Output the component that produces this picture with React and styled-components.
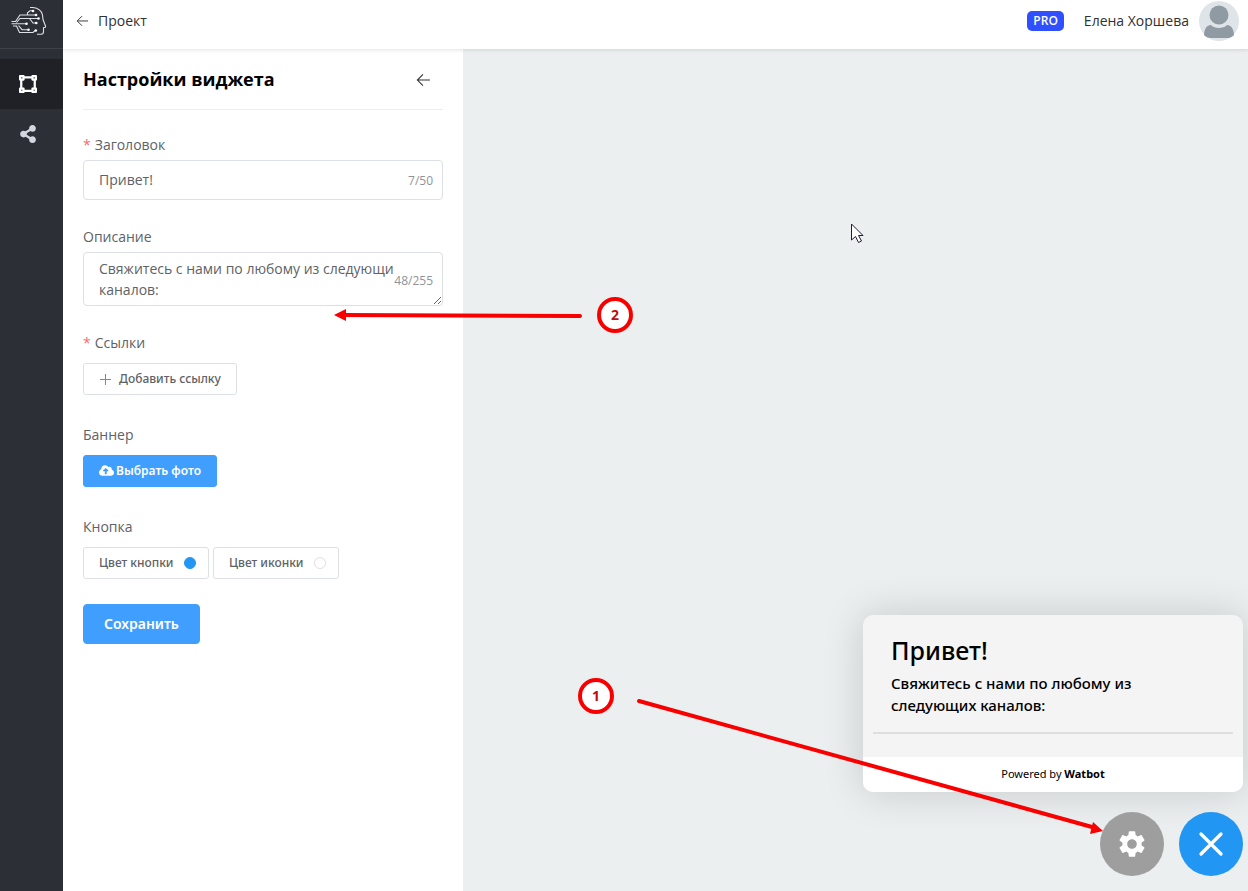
import React, { useState } from "react";
import styled, { createGlobalStyle, css } from "styled-components";
import { FaShareAlt, FaVectorSquare, FaCloudUploadAlt } from "react-icons/fa";
import { MdSettings } from "react-icons/md";

const GlobalStyle = createGlobalStyle`
  *, *::before, *::after { box-sizing: border-box; }
  body {
    margin: 0;
    font-family: "Open Sans", "Noto Sans", sans-serif;
    font-size: 14px;
    color: #606266;
    background: #ebeff0;
  }
  button, input, textarea { font: inherit; color: inherit; }
  button { cursor: pointer; }
`;

const Page = styled.div`
  display: flex;
  min-height: 100vh;
`;

const Sidebar = styled.aside`
  flex: 0 0 63px;
  background: #2d2f37;
`;

const LogoLink = styled.a`
  display: block;
  height: 49px;
  padding: 4px 10px;
  border-bottom: 1px solid #404249;
  svg { display: block; }
`;

const Nav = styled.nav`
  display: flex;
  flex-direction: column;
  padding-top: 10px;
`;

const NavLink = styled.a`
  display: flex;
  align-items: center;
  height: 50px;
  padding-left: 18px;
  color: ${(p) => (p.$active ? "#fff" : "#d3d7e0")};
  background: ${(p) => (p.$active ? "#202126" : "transparent")};
  svg { width: 20px; }
`;

const Body = styled.div`
  flex: 1;
  min-width: 0;
  display: flex;
  flex-direction: column;
`;

const Header = styled.header`
  position: relative;
  z-index: 1;
  display: flex;
  align-items: center;
  justify-content: space-between;
  height: 49px;
  padding: 0 9px 8px 13px;
  color: #303133;
  background: #fff;
  box-shadow: 0 1px 4px rgba(0, 21, 41, 0.12);
`;

const BackLink = styled.a`
  display: flex;
  align-items: center;
  gap: 9px;
  color: inherit;
  text-decoration: none;
`;

const User = styled.div`
  display: flex;
  align-items: center;
`;

const Badge = styled.span`
  margin-right: 20px;
  padding: 0 6px;
  border-radius: 5px;
  font-size: 12px;
  font-weight: 600;
  line-height: 20px;
  color: #fff;
  background: #304ffe;
`;

const Avatar = styled.svg`
  width: 40px;
  height: 40px;
  margin-left: 10px;
`;

const Workspace = styled.div`
  flex: 1;
  display: flex;
`;

const Panel = styled.section`
  flex: 0 0 400px;
  padding: 0 20px;
  background: #fff;
`;

const PanelHead = styled.div`
  display: flex;
  align-items: center;
  justify-content: space-between;
  height: 61px;
  padding-right: 12px;
  border-bottom: 1px solid #ebeef5;
`;

const PanelTitle = styled.h1`
  margin: 0;
  font-size: 18px;
  font-weight: 700;
  color: #000;
`;

const IconButton = styled.button`
  display: flex;
  padding: 0;
  border: 0;
  color: #303133;
  background: none;
`;

const Form = styled.form`
  padding-top: 20px;
`;

const Field = styled.div`
  margin-bottom: 22px;
`;

const labelStyle = css`
  display: block;
  line-height: 30px;
`;

const Label = styled.label`${labelStyle}`;
const GroupLabel = styled.div`${labelStyle}`;

const Required = styled.span`
  margin-right: 4px;
  color: #f56c6c;
`;

const Control = styled.div`
  position: relative;
  display: flex;
`;

const boxStyle = css`
  width: 100%;
  border: 1px solid #dcdfe6;
  border-radius: 4px;
  outline: none;
  background: #fff;
`;

const TextInput = styled.input`
  ${boxStyle}
  height: 40px;
  padding: 0 50px 1px 15px;
`;

const TextArea = styled.textarea`
  ${boxStyle}
  height: 54px;
  padding: 5px 15px;
  line-height: 21px;
  resize: vertical;
  overflow: hidden;
`;

const Counter = styled.span`
  position: absolute;
  right: 10px;
  bottom: 5px;
  font-size: 12px;
  line-height: ${(p) => p.$height}px;
  color: #909399;
  background: #fff;
`;

const Actions = styled.div`
  display: flex;
  gap: 4px;
  padding: 5px 0 3px;
`;

const Button = styled.button`
  display: flex;
  align-items: center;
  gap: ${(p) => p.$gap || 8}px;
  height: 32px;
  padding: 0 15px 1px;
  border: 1px solid ${(p) => (p.$primary ? "#409eff" : "#dcdfe6")};
  border-radius: 3px;
  font-family: "Noto Sans", "Open Sans", sans-serif;
  font-size: 12px;
  font-weight: ${(p) => (p.$primary ? 600 : 500)};
  color: ${(p) => (p.$primary ? "#fff" : "#606266")};
  background: ${(p) => (p.$primary ? "#409eff" : "#fff")};
`;

const ColorButton = styled(Button)`
  justify-content: space-between;
  min-width: 126px;
  padding-right: 12px;
`;

const SaveButton = styled(Button)`
  height: 40px;
  padding: 0 20px 1px;
  border-radius: 4px;
  font-size: 14px;
`;

const Swatch = styled.span`
  width: 12px;
  height: 12px;
  border: 1px solid ${(p) => p.$border};
  border-radius: 50%;
  background: ${(p) => p.$color};
`;

const Stage = styled.main`
  position: relative;
  flex: 1;
  display: flex;
  flex-direction: column;
  align-items: flex-end;
  justify-content: flex-end;
  gap: 20px;
  padding: 15px 5px;
`;

const Widget = styled.article`
  width: 380px;
  border-radius: 10px;
  overflow: hidden;
  font-family: "Noto Sans", "Open Sans", sans-serif;
  color: #000;
  background: #f4f4f4;
  box-shadow: 0 0 40px rgba(0, 0, 0, 0.16);
`;

const WidgetBody = styled.div`
  padding: 17px 10px 23px;
`;

const WidgetTitle = styled.h2`
  margin: 0;
  padding: 0 18px;
  font-size: 25px;
  font-weight: 500;
  line-height: 36px;
`;

const WidgetText = styled.p`
  margin: 4px 0 16px;
  padding: 0 80px 0 18px;
  font-size: 15px;
  font-weight: 500;
  line-height: 22px;
`;

const Divider = styled.hr`
  height: 2px;
  margin: 0;
  border: 0;
  background: #dedede;
`;

const WidgetFooter = styled.footer`
  padding-bottom: 1px;
  font-size: 11px;
  line-height: 34px;
  text-align: center;
  background: #fff;
`;

const Floating = styled.div`
  display: flex;
  gap: 15px;
`;

const RoundButton = styled.button`
  display: flex;
  align-items: center;
  justify-content: center;
  width: 64px;
  height: 64px;
  padding: 0;
  border: 0;
  border-radius: 50%;
  color: #fff;
  background: ${(p) => p.$color};
`;

const Marker = styled.span`
  position: absolute;
  z-index: 2;
  width: 36px;
  height: 36px;
  border: 4px solid #f80000;
  border-radius: 50%;
  font-size: 14px;
  font-weight: 700;
  line-height: 27px;
  text-align: center;
  color: #c00d0d;
  background: #fff;
`;

const FieldMarker = styled(Marker)`
  top: 248px;
  left: 134px;
`;

const SettingsMarker = styled(Marker)`
  right: 634px;
  bottom: 177px;
`;

const Arrow = styled.svg`
  position: absolute;
  z-index: 2;
  pointer-events: none;
`;

const FieldArrow = styled(Arrow)`
  top: 258px;
  left: -130px;
`;

const SettingsArrow = styled(Arrow)`
  right: 144px;
  bottom: 54px;
`;

const Cursor = styled(Arrow)`
  top: 174px;
  left: 387px;
`;

function Logo() {
  return (
    <svg width="38" height="34" viewBox="10 4 38 34" fill="none" stroke="#dde0e4" strokeWidth="1.100">
      <path d="M30 7.500h3c5 .5 8.500 3 9.500 7.500l.5 4.500 2.500 6.500c.3.800 0 1.300-.8 1.500l-1.200.3v4c0 1.700-.8 2.500-2.500 2.500h-4" />
      <path d="M11.500 21.500h4l4.500-6.500h16M16.500 22.500l3.500-4H38.500M11.500 23.700h15M13 26h3.500l3 6.500h13.500l2.500-2M18.500 25.500l3.500 4.200h6.500M27.500 15v-2.200l2.500-2h3M29.500 18.500l3.500 4.500h3" />
      <g fill="#fff" stroke="none">
        <circle cx="33" cy="11" r="1.300" />
        <circle cx="36" cy="15" r="1.300" />
        <circle cx="38.500" cy="18.500" r="1.300" />
        <circle cx="36.300" cy="23" r="1.300" />
        <circle cx="26.500" cy="23.700" r="1.300" />
        <circle cx="28.500" cy="29.700" r="1.300" />
        <circle cx="35.800" cy="30.500" r="1.300" />
      </g>
    </svg>
  );
}

function ArrowLeft({ size }) {
  return (
    <svg width={size} height={size} viewBox="0 0 14 14" fill="none" stroke="currentColor" strokeWidth="1">
      <path d="M13 7.500H1.500M6.500 2.300 1.300 7.500l5.200 5.200" />
    </svg>
  );
}

export default function App() {
  const [title, setTitle] = useState("Привет!");
  const [text, setText] = useState("Свяжитесь с нами по любому из следующих каналов:");

  return (
    <>
      <GlobalStyle />
      <Page>
        <Sidebar>
          <LogoLink href="#" aria-label="Watbot"><Logo /></LogoLink>
          <Nav>
            <NavLink href="#widget" $active aria-label="Виджет"><FaVectorSquare size={18} /></NavLink>
            <NavLink href="#share" aria-label="Поделиться"><FaShareAlt size={18} /></NavLink>
          </Nav>
        </Sidebar>
        <Body>
          <Header>
            <BackLink href="#project"><ArrowLeft size={13} />Проект</BackLink>
            <User>
              <Badge>PRO</Badge>
              Елена Хоршева
              <Avatar viewBox="0 0 40 40">
                <circle cx="20" cy="20" r="20" fill="#dfe4e8" />
                <circle cx="20" cy="14" r="9.500" fill="#8f9aa3" />
                <path d="M5 34c.5-7 3-9.500 7-10 2 2.300 5 3 8 3s6-.7 8-3c4 .5 6.500 3 7 10-2 2.500-5 3-7 3H12c-3 0-5.500-1-7-3z" fill="#8f9aa3" />
              </Avatar>
            </User>
          </Header>
          <Workspace>
            <Panel>
              <PanelHead>
                <PanelTitle>Настройки виджета</PanelTitle>
                <IconButton type="button" aria-label="Назад"><ArrowLeft size={15} /></IconButton>
              </PanelHead>
              <Form onSubmit={(e) => e.preventDefault()}>
                <Field>
                  <Label htmlFor="title"><Required>*</Required>Заголовок</Label>
                  <Control>
                    <TextInput id="title" maxLength={50} value={title} onChange={(e) => setTitle(e.target.value)} />
                    <Counter $height={28}>{title.length}/50</Counter>
                  </Control>
                </Field>
                <Field>
                  <Label htmlFor="text">Описание</Label>
                  <Control>
                    <TextArea id="text" maxLength={255} value={text} onChange={(e) => setText(e.target.value)} />
                    <Counter $height={40}>{text.length}/255</Counter>
                  </Control>
                </Field>
                <Field>
                  <GroupLabel><Required>*</Required>Ссылки</GroupLabel>
                  <Actions>
                    <Button type="button">
                      <svg width="12" height="12" viewBox="0 0 12 12" stroke="#85878b"><path d="M6.500 1v11M1 6.500h11" /></svg>
                      Добавить ссылку
                    </Button>
                  </Actions>
                </Field>
                <Field>
                  <GroupLabel>Баннер</GroupLabel>
                  <Actions>
                    <Button type="button" $primary $gap={2}><FaCloudUploadAlt size={15} />Выбрать фото</Button>
                  </Actions>
                </Field>
                <Field>
                  <GroupLabel>Кнопка</GroupLabel>
                  <Actions>
                    <ColorButton type="button">Цвет кнопки<Swatch $color="#2196f3" $border="#2196f3" /></ColorButton>
                    <ColorButton type="button">Цвет иконки<Swatch $color="#fff" $border="#dcdfe6" /></ColorButton>
                  </Actions>
                </Field>
                <SaveButton type="submit" $primary>Сохранить</SaveButton>
              </Form>
            </Panel>
            <Stage>
              <Widget>
                <WidgetBody>
                  <WidgetTitle>{title}</WidgetTitle>
                  <WidgetText>{text}</WidgetText>
                  <Divider />
                </WidgetBody>
                <WidgetFooter>Powered by <b>Watbot</b></WidgetFooter>
              </Widget>
              <Floating>
                <RoundButton type="button" $color="#9e9e9e" aria-label="Настройки"><MdSettings size={32} /></RoundButton>
                <RoundButton type="button" $color="#2196f3" aria-label="Закрыть">
                  <svg width="26" height="26" viewBox="0 0 26 26" stroke="currentColor" strokeWidth="3.300" strokeLinecap="round"><path d="M3 3l20 20M23 3 3 23" /></svg>
                </RoundButton>
              </Floating>
              <FieldArrow width="250" height="16" viewBox="0 0 250 16">
                <path d="M9 8l238 1" stroke="#f80000" strokeWidth="4" strokeLinecap="round" />
                <path d="M1 8 13 2v12z" fill="#f80000" />
              </FieldArrow>
              <FieldMarker>2</FieldMarker>
              <SettingsMarker>1</SettingsMarker>
              <SettingsArrow width="468" height="140" viewBox="0 0 468 140">
                <path d="M3 4l453 126" stroke="#f80000" strokeWidth="4" strokeLinecap="round" />
                <path d="M467 134 454 137l3-12z" fill="#f80000" />
              </SettingsArrow>
              <Cursor width="14" height="20" viewBox="0 0 14 20">
                <path d="M1.500 1v16l4-3.500 3 6 3-1.500-3-5.500h4.500z" fill="#fff" stroke="#1d2030" />
              </Cursor>
            </Stage>
          </Workspace>
        </Body>
      </Page>
    </>
  );
}
